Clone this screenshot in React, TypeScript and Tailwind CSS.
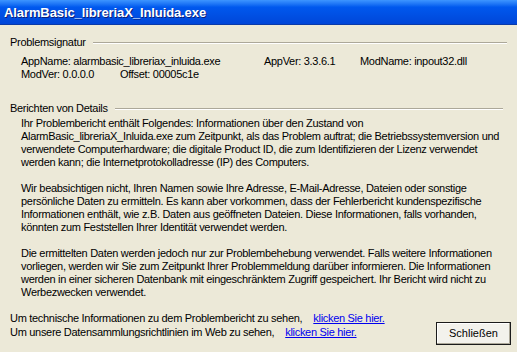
import React from 'react';

function GroupHeader({ title, lineEnd }: { title: string; lineEnd: string }) {
    return (
        <div className="flex items-center h-[13px]">
            <span className="whitespace-nowrap">{title}</span>
            <div className={`flex-1 ml-[7px] ${lineEnd} border-t border-t-[#aca899] border-b border-b-white`} />
        </div>
    );
}

const details = [
    [
        'Ihr Problembericht enthält Folgendes: Informationen über den Zustand von',
        'AlarmBasic_libreriaX_Inluida.exe zum Zeitpunkt, als das Problem auftrat; die Betriebssystemversion und',
        'verwendete Computerhardware; die digitale Product ID, die zum Identifizieren der Lizenz verwendet',
        'werden kann; die Internetprotokolladresse (IP) des Computers.',
    ],
    [
        'Wir beabsichtigen nicht, Ihren Namen sowie Ihre Adresse, E-Mail-Adresse, Dateien oder sonstige',
        'persönliche Daten zu ermitteln. Es kann aber vorkommen, dass der Fehlerbericht kundenspezifische',
        'Informationen enthält, wie z.B. Daten aus geöffneten Dateien. Diese Informationen, falls vorhanden,',
        'könnten zum Feststellen Ihrer Identität verwendet werden.',
    ],
    [
        'Die ermittelten Daten werden jedoch nur zur Problembehebung verwendet. Falls weitere Informationen',
        'vorliegen, werden wir Sie zum Zeitpunkt Ihrer Problemmeldung darüber informieren. Die Informationen',
        'werden in einer sicheren Datenbank mit eingeschränktem Zugriff gespeichert. Ihr Bericht wird nicht zu',
        'Werbezwecken verwendet.',
    ],
];

export default function App() {
    return (
        <div className="w-[517px] h-[352px] overflow-hidden bg-[#ece9d8] text-black text-[11px] leading-[13px] tracking-[-0.3px] font-['Liberation_Sans',Arial,sans-serif]">
            {/* title bar */}
            <div className="h-[25px] flex items-center pl-[4px] bg-gradient-to-b from-[#3d95ff] via-[#0058ee] via-30% to-[#0046d8] border-b border-b-[#0a3aa8]">
                <span className="text-white font-bold text-[13px] tracking-[-0.1px] [text-shadow:1px_1px_0_#0a1f7a]">
                    AlarmBasic_libreriaX_Inluida.exe
                </span>
            </div>

            <div className="pl-[10px] pr-[10px] pt-[11px]">
                <GroupHeader title="Problemsignatur" lineEnd="mr-0" />
                <div className="pl-[11px] mt-[6px]">
                    <div className="flex">
                        <span className="w-[243px]">AppName: alarmbasic_libreriax_inluida.exe</span>
                        <span className="w-[96px]">AppVer: 3.3.6.1</span>
                        <span>ModName: inpout32.dll</span>
                    </div>
                    <div className="flex">
                        <span className="w-[99px]">ModVer: 0.0.0.0</span>
                        <span>Offset: 00005c1e</span>
                    </div>
                </div>

                <div className="mt-[21px]">
                    <GroupHeader title="Berichten von Details" lineEnd="mr-[4px]" />
                </div>
                <div className="pl-[11px] mt-[2px] flex flex-col gap-[13px]">
                    {details.map((para, i) => (
                        <p key={i}>
                            {para.map((line, j) => (
                                <span key={j} className="block whitespace-nowrap">{line}</span>
                            ))}
                        </p>
                    ))}
                </div>

                <div className="flex items-start justify-between mt-[13px]">
                    <div className="flex flex-col gap-[1px]">
                        <div className="flex">
                            <span>Um technische Informationen zu dem Problembericht zu sehen,</span>
                            <a className="ml-[11px] text-[#0000ee] underline">klicken Sie hier.</a>
                        </div>
                        <div className="flex">
                            <span>Um unsere Datensammlungsrichtlinien im Web zu sehen,</span>
                            <a className="ml-[11px] text-[#0000ee] underline">klicken Sie hier.</a>
                        </div>
                    </div>
                    <button className="mt-[10px] -mr-[4px] w-[75px] h-[23px] border border-[#1b1b1b] bg-[#f3f2ec] shadow-[inset_-1px_-1px_0_#aca899,inset_1px_1px_0_#ffffff] text-[11px] tracking-normal">
                        Schließen
                    </button>
                </div>
            </div>
        </div>
    );
}
